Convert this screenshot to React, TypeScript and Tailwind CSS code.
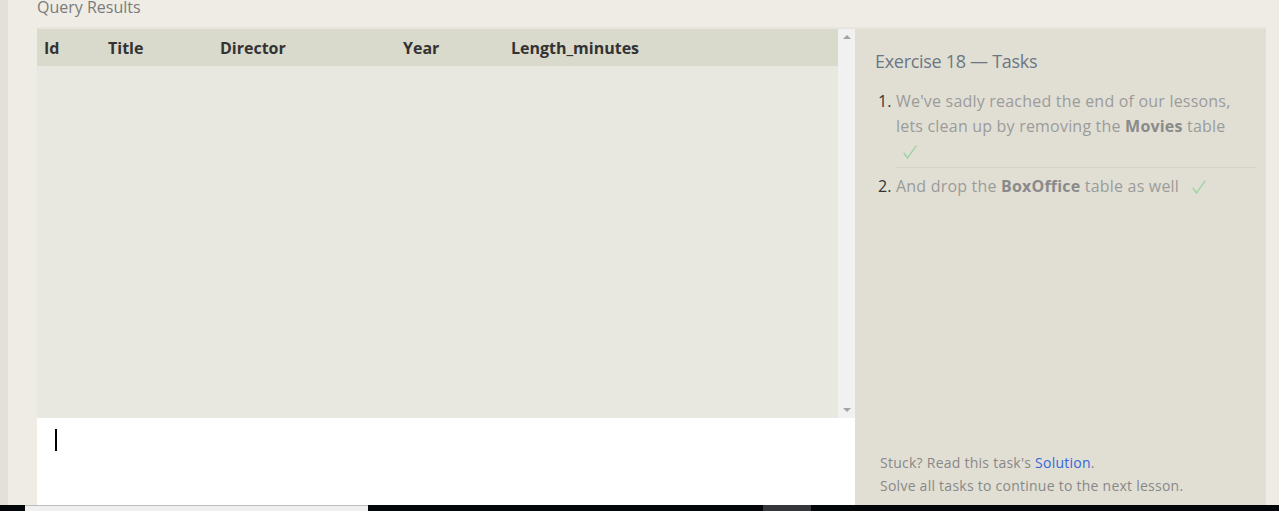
import React from 'react';

const columns = [
  { label: 'Id', w: 'w-[64px]' },
  { label: 'Title', w: 'w-[112px]' },
  { label: 'Director', w: 'w-[183px]' },
  { label: 'Year', w: 'w-[108px]' },
  { label: 'Length_minutes', w: 'flex-1' },
];

const Check = () => (
  <svg viewBox="0 0 14 14" className="inline-block h-[14px] w-[14px] align-[-2px]" fill="none">
    <path d="M1 8.2 L4.6 13 L13 1" stroke="#8fd3a0" strokeWidth="1.3" strokeLinecap="round" strokeLinejoin="round" />
  </svg>
);

export default function App() {
  return (
    <div
      className="relative flex h-[511px] w-full overflow-hidden bg-[#efece5]"
      style={{ fontFamily: '"Open Sans", "Liberation Sans", sans-serif' }}
    >
      {/* left window edge */}
      <div className="w-2 shrink-0 bg-[#e3e0dc]" />

      <div className="flex min-w-0 flex-1 flex-col pl-[29px] pr-[13px]">
        <h3 className="-mt-[5px] mb-2 h-6 text-base font-normal leading-6 text-[#7b7b7b]">Query Results</h3>

        <div className="flex flex-1 border-t-2 border-[#e7e5de]">
          {/* results + editor */}
          <div className="flex w-[818px] shrink-0 flex-col">
            <div className="flex h-[389px]">
              <div className="flex flex-1 flex-col bg-[#e9e8e0]">
                <div className="flex h-[37px] items-center bg-[#d9d9cc] pl-[7px] text-base font-bold text-[#333]">
                  {columns.map((c) => (
                    <div key={c.label} className={c.w}>
                      {c.label}
                    </div>
                  ))}
                </div>
              </div>
              {/* scrollbar */}
              <div className="flex w-[17px] flex-col items-center justify-between bg-[#f1f1f1] py-[6px]">
                <div className="h-0 w-0 border-x-[4px] border-b-[4px] border-x-transparent border-b-[#a3a3a3]" />
                <div className="h-0 w-0 border-x-[4px] border-t-[4px] border-x-transparent border-t-[#a3a3a3]" />
              </div>
            </div>
            <div className="flex-1 bg-white pl-[18px] pt-[11px]">
              <div className="h-[22px] w-[2px] bg-black" />
            </div>
          </div>

          {/* tasks panel */}
          <div className="flex flex-1 flex-col justify-between bg-[#e1dfd4] pb-[14px] pl-5 pr-[9px]">
            <div>
              <h2 className="mt-[20px] text-[18px] font-normal leading-6 tracking-[-0.3px] text-[#6c7784]">
                Exercise 18 — Tasks
              </h2>
              <ol className="mt-[16px] text-base leading-[25px] tracking-[0.2px] text-[#9b9b9b]">
                <li className="flex">
                  <span className="w-[21px] shrink-0 pl-[3px] tracking-normal text-[#333]">1.</span>
                  <div className="flex-1 border-b border-[#d6d4c9] pb-[3px]">
                    <div className="max-w-[340px]">
                      We've sadly reached the end of our lessons, lets clean up by removing the{' '}
                      <b className="text-[#8a8a8a]">Movies</b> table
                    </div>
                    <div className="pl-[7px]">
                      <Check />
                    </div>
                  </div>
                </li>
                <li className="flex pt-[6px]">
                  <span className="w-[21px] shrink-0 pl-[3px] tracking-normal text-[#333]">2.</span>
                  <span>
                    And drop the <b className="text-[#8a8a8a]">BoxOffice</b> table as well
                    <span className="ml-[13px]">
                      <Check />
                    </span>
                  </span>
                </li>
              </ol>
            </div>
            <div className="pl-[5px] text-sm leading-[23px] tracking-[0.25px] text-[#888]">
              <p>
                Stuck? Read this task's <a className="text-[#3366dd]">Solution</a>.
              </p>
              <p>Solve all tasks to continue to the next lesson.</p>
            </div>
          </div>
        </div>
      </div>

      {/* taskbar strip at the bottom edge */}
      <div className="absolute inset-x-0 bottom-0 flex h-[6px] bg-[#03070a]">
        <div className="ml-[25px] w-[343px] border-t border-[#bdbdbd] bg-[#f0f0f0]" />
        <div className="ml-[395px] w-[48px] bg-[#34363a]" />
      </div>
    </div>
  );
}
